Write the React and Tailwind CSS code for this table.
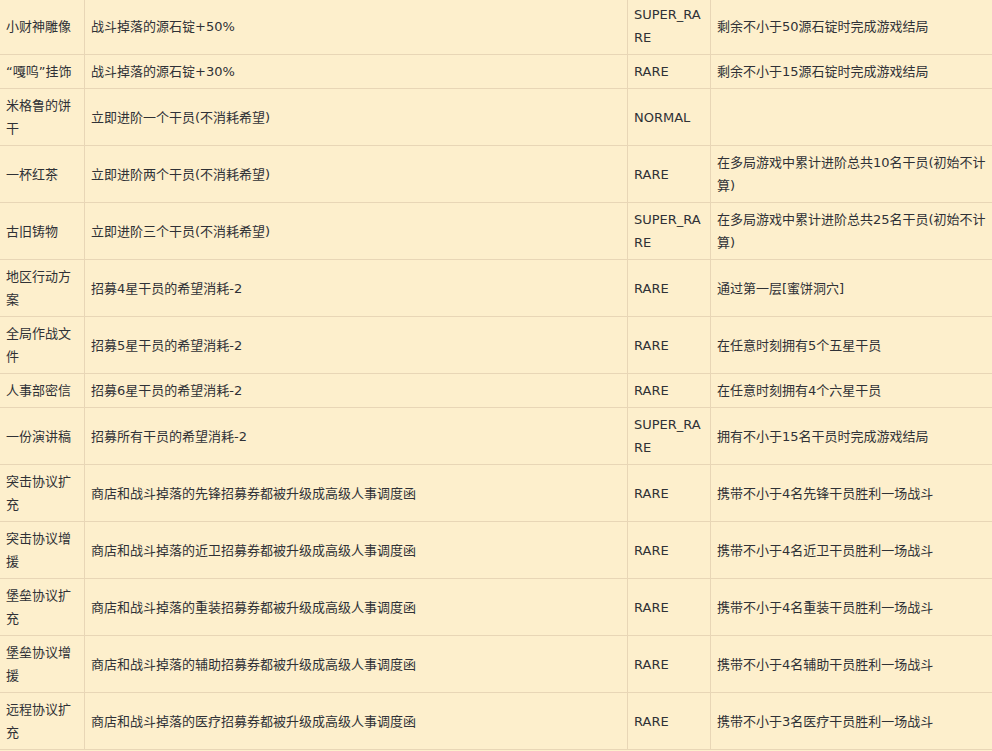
const rows = [
  ['小财神雕像', '战斗掉落的源石锭+50%', 'SUPER_RARE', '剩余不小于50源石锭时完成游戏结局'],
  ['“嘎呜”挂饰', '战斗掉落的源石锭+30%', 'RARE', '剩余不小于15源石锭时完成游戏结局'],
  ['米格鲁的饼干', '立即进阶一个干员(不消耗希望)', 'NORMAL', ''],
  ['一杯红茶', '立即进阶两个干员(不消耗希望)', 'RARE', '在多局游戏中累计进阶总共10名干员(初始不计算)'],
  ['古旧铸物', '立即进阶三个干员(不消耗希望)', 'SUPER_RARE', '在多局游戏中累计进阶总共25名干员(初始不计算)'],
  ['地区行动方案', '招募4星干员的希望消耗-2', 'RARE', '通过第一层[蜜饼洞穴]'],
  ['全局作战文件', '招募5星干员的希望消耗-2', 'RARE', '在任意时刻拥有5个五星干员'],
  ['人事部密信', '招募6星干员的希望消耗-2', 'RARE', '在任意时刻拥有4个六星干员'],
  ['一份演讲稿', '招募所有干员的希望消耗-2', 'SUPER_RARE', '拥有不小于15名干员时完成游戏结局'],
  ['突击协议扩充', '商店和战斗掉落的先锋招募券都被升级成高级人事调度函', 'RARE', '携带不小于4名先锋干员胜利一场战斗'],
  ['突击协议增援', '商店和战斗掉落的近卫招募券都被升级成高级人事调度函', 'RARE', '携带不小于4名近卫干员胜利一场战斗'],
  ['堡垒协议扩充', '商店和战斗掉落的重装招募券都被升级成高级人事调度函', 'RARE', '携带不小于4名重装干员胜利一场战斗'],
  ['堡垒协议增援', '商店和战斗掉落的辅助招募券都被升级成高级人事调度函', 'RARE', '携带不小于4名辅助干员胜利一场战斗'],
  ['远程协议扩充', '商店和战斗掉落的医疗招募券都被升级成高级人事调度函', 'RARE', '携带不小于3名医疗干员胜利一场战斗'],
]

export default function App() {
  return (
    <div className="h-[751px] w-[992px] overflow-hidden bg-[#fdefcc]">
      <table
        className="-ml-px -mt-[3px] w-[1000px] table-fixed border-collapse font-['DejaVu_Sans','Noto_Sans_CJK_SC',sans-serif] text-[13px] leading-[23px] text-[#2f3136]"
      >
        <colgroup>
          <col className="w-[85px]" />
          <col className="w-[543px]" />
          <col className="w-[83px]" />
          <col className="w-[289px]" />
        </colgroup>
        <tbody>
          {rows.map((r, i) => (
            <tr key={i}>
              {r.map((c, j) => (
                <td
                  key={j}
                  className="break-all border border-[#e8d6b6] px-[6px] py-[5px] align-middle"
                >
                  {c}
                </td>
              ))}
            </tr>
          ))}
        </tbody>
      </table>
    </div>
  )
}
